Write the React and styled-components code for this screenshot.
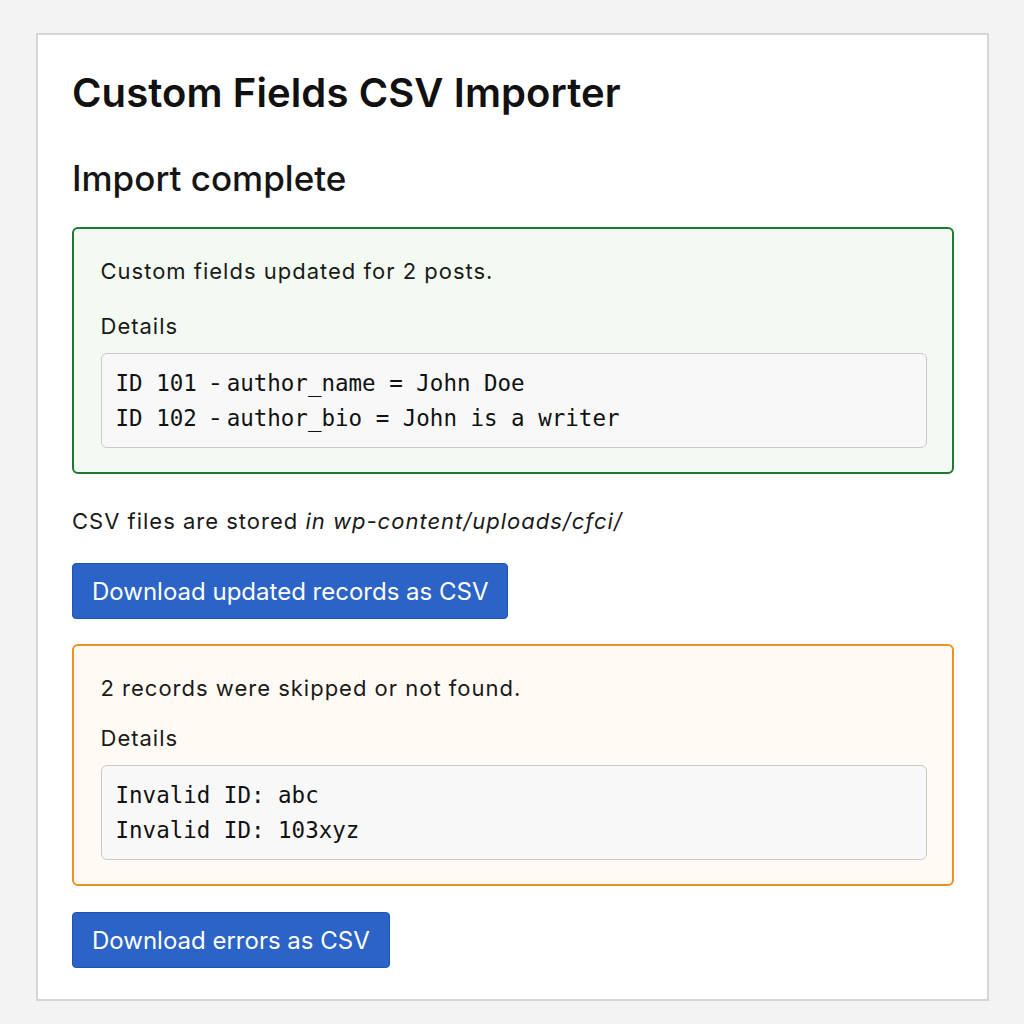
import React from 'react'
import styled, { createGlobalStyle } from 'styled-components'

const GlobalStyle = createGlobalStyle`
    html, body {
        margin: 0;
        padding: 0;
        background: #f3f3f3;
    }
    body {
        font-family: Inter, "Liberation Sans", Arial, sans-serif;
        color: #1a1a1a;
    }
`

const Page = styled.div`
    width: 1024px;
    height: 1024px;
    padding: 33px 35px 23px 36px;
    box-sizing: border-box;
`

const Card = styled.div`
    height: 100%;
    box-sizing: border-box;
    background: #ffffff;
    border: 2px solid #d6d6d6;
    padding: 34px 33px 0 34px;
    display: flex;
    flex-direction: column;
    align-items: flex-start;
`

const Title = styled.h1`
    margin: 0;
    font-size: 40px;
    font-weight: 600;
    line-height: 48px;
    letter-spacing: 0.1px;
    color: #111;
`

const Subtitle = styled.h2`
    margin: 40px 0 0;
    font-size: 35px;
    font-weight: 500;
    line-height: 42px;
    color: #151515;
`

const Notice = styled.div`
    align-self: stretch;
    margin-top: ${p => p.$top}px;
    border: 2px solid ${p => p.$border};
    background: ${p => p.$bg};
    border-radius: 6px;
    padding: 26.5px 25.5px 24.5px 26.5px;
`

const Text = styled.p`
    margin: ${p => p.$top || 0}px 0 0;
    font-size: 22px;
    line-height: 30px;
    letter-spacing: 1px;
`

const Code = styled.pre`
    margin: 12px 0 0;
    background: #f8f8f8;
    border: 1.5px solid #c9c9c9;
    border-radius: 6px;
    padding: 12px 14px 11px;
    font-family: "DejaVu Sans Mono", "Liberation Mono", monospace;
    font-size: 22.5px;
    line-height: 35px;
    color: #111;
`

// the dash between id and field is narrower than a mono cell
const Dash = styled.span`
    font-family: Inter, "Liberation Sans", Arial, sans-serif;
    font-size: 22px;
`

const Path = styled.em`
    font-style: italic;
`

const Button = styled.button`
    margin-top: ${p => p.$top}px;
    background: #2b63c6;
    color: #fff;
    border: 1px solid #1f55b5;
    border-radius: 4px;
    padding: 0 19px;
    height: 56px;
    font-family: inherit;
    font-size: 24px;
    font-weight: 400;
    cursor: pointer;
`

const updated = [
    ['ID 101', 'author_name = John Doe'],
    ['ID 102', 'author_bio = John is a writer'],
]

export default function App() {
    return (
        <Page>
            <GlobalStyle />
            <Card>
                <Title>Custom Fields CSV Importer</Title>
                <Subtitle>Import complete</Subtitle>
                <Notice $top={28} $border="#1b7a31" $bg="#f3faf1">
                    <Text>Custom fields updated for 2 posts.</Text>
                    <Text $top={25}>Details</Text>
                    <Code>
                        {updated.map(([id, field], i) => (
                            <div key={i}>{id} <Dash>- </Dash>{field}</div>
                        ))}
                    </Code>
                </Notice>
                <Text $top={32}>CSV files are stored <Path>in wp-content/uploads/cfci/</Path></Text>
                <Button $top={27}>Download updated records as CSV</Button>
                <Notice $top={25} $border="#ef9022" $bg="#fffbf4">
                    <Text>2 records were skipped or not found.</Text>
                    <Text $top={20}>Details</Text>
                    <Code>{`Invalid ID: abc
Invalid ID: 103xyz`}</Code>
                </Notice>
                <Button $top={26}>Download errors as CSV</Button>
            </Card>
        </Page>
    )
}
